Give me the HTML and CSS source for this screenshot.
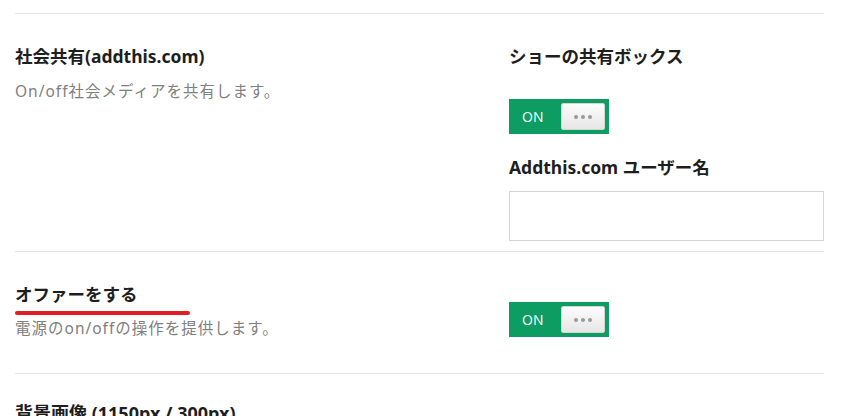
FILE: index.html
```html
<!DOCTYPE html>
<html lang="ja">
<head>
  <meta charset="UTF-8">
  <meta name="viewport" content="width=device-width, initial-scale=1.0">
  <title>設定</title>
  <link rel="stylesheet" href="styles.css">
</head>
<body>
  <div class="settings">
    <div class="row">
      <div class="col">
        <div class="title">社会共有(addthis.com)</div>
        <div class="desc">On/off社会メディアを共有します。</div>
      </div>
      <div class="col">
        <div class="title">ショーの共有ボックス</div>
        <div class="switch first"><span class="on">ON</span><span class="knob"><i></i><i></i><i></i></span></div>
        <div class="title label">Addthis.com ユーザー名</div>
        <input class="field" type="text">
      </div>
    </div>
    <div class="row">
      <div class="col">
        <div class="title">オファーをする</div>
        <div class="mark"></div>
        <div class="desc tight">電源のon/offの操作を提供します。</div>
      </div>
      <div class="col">
        <div class="switch second"><span class="on">ON</span><span class="knob"><i></i><i></i><i></i></span></div>
      </div>
    </div>
    <div class="row last">
      <div class="col">
        <div class="title big">背景画像 (1150px / 300px)</div>
      </div>
    </div>
  </div>
</body>
</html>
```

FILE: styles.css
```css
body {
  margin: 0;
  background: #fff;
  font-family: "Noto Sans", "Noto Sans CJK JP", sans-serif;
  color: #222;
}
.settings {
  padding: 13px 17px 0 15px;
}
.row {
  display: grid;
  grid-template-columns: 494px 1fr;
  border-top: 1px solid #e3e3e3;
  padding: 30px 0 10px;
}
.row + .row {
  padding-bottom: 35px;
}
.row.last {
  padding-top: 27px;
}
.title {
  font-size: 17.5px;
  font-weight: 700;
  line-height: 24px;
  color: #1e1e1e;
}
.title.big {
  font-size: 18px;
}
.desc {
  margin-top: 13px;
  font-size: 15.5px;
  line-height: 20px;
  letter-spacing: 1px;
  color: #808080;
}
.desc.tight {
  margin-top: 3px;
}
.mark {
  margin-top: 5px;
  width: 175px;
  height: 4px;
  border-radius: 2px;
  background: #e31d24;
}
.switch {
  display: flex;
  align-items: center;
  justify-content: space-between;
  width: 100px;
  height: 35px;
  box-sizing: border-box;
  padding: 0 4px 0 13px;
  background: #0d9c62;
}
.switch.first {
  margin-top: 31px;
}
.switch.second {
  margin-top: 20px;
}
.on {
  color: #fff;
  font-size: 14px;
  font-family: "Open Sans", sans-serif;
}
.knob {
  display: flex;
  align-items: center;
  justify-content: center;
  gap: 3px;
  width: 44px;
  height: 27px;
  box-sizing: border-box;
  border: 1px solid #d4d4d4;
  border-radius: 2px;
  background: linear-gradient(#fdfdfd, #e6e6e6);
}
.knob i {
  width: 4px;
  height: 4px;
  border-radius: 50%;
  background: #9a9a9a;
}
.label {
  margin-top: 21px;
}
.field {
  display: block;
  margin-top: 12px;
  width: 100%;
  height: 50px;
  box-sizing: border-box;
  border: 1px solid #d3d3d9;
  border-radius: 0;
  outline: none;
}
```
